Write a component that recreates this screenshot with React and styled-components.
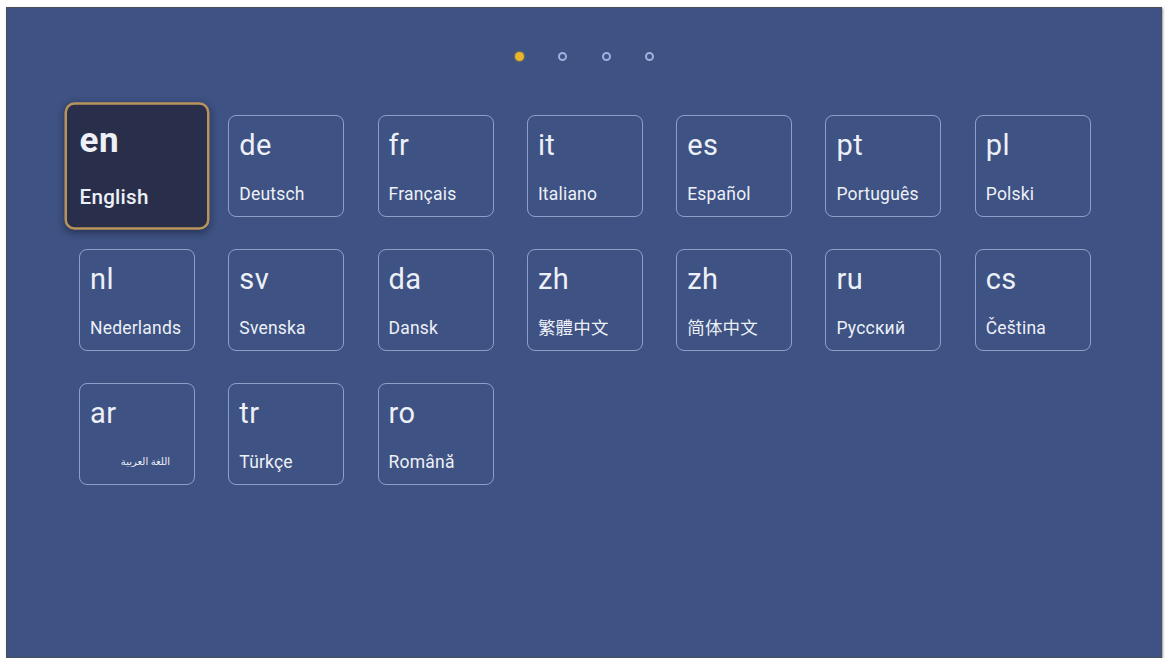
import React from 'react'
import styled, { createGlobalStyle } from 'styled-components'

const GlobalStyle = createGlobalStyle`
  html, body {
    margin: 0;
    padding: 0;
    background: #ffffff;
  }
  body {
    font-family: Roboto, "Noto Sans", "Noto Sans CJK SC", sans-serif;
  }
`

const Screen = styled.main`
  box-sizing: border-box;
  width: 1156px;
  height: 651px;
  margin: 7px 0 0 6px;
  background: #3e5283;
  border: 1px solid #4a4f5c;
  box-shadow: 1px 1px 2px rgba(40, 40, 50, 0.5);
  padding: 43px 0 0 72px;
  overflow: hidden;
`

const Pager = styled.div`
  display: flex;
  justify-content: center;
  align-items: center;
  gap: 34.5px;
  width: 1011px;
  height: 11px;
  margin-bottom: 53px;
`

const Dot = styled.span`
  box-sizing: border-box;
  width: 9px;
  height: 9px;
  border-radius: 50%;
  background: ${p => (p.$active ? '#eab527' : 'transparent')};
  border: ${p => (p.$active ? 'none' : '2px solid #9fb0dc')};
  box-shadow: ${p => (p.$active ? '0 0 3px rgba(234, 181, 39, 0.6)' : 'none')};
`

const Grid = styled.div`
  display: grid;
  grid-template-columns: repeat(7, 116px);
  grid-auto-rows: 102px;
  column-gap: 33.3px;
  row-gap: 32px;
`

const Card = styled.div`
  box-sizing: border-box;
  display: flex;
  flex-direction: column;
  padding: 13px 10px 0 10px;
  border-radius: 8px;
  border: ${p => (p.$focused ? '2px solid #b8945a' : '1.5px solid rgba(190, 206, 242, 0.62)')};
  background: ${p => (p.$focused ? '#292f4b' : 'transparent')};
  color: #edf0f7;
  transform: ${p => (p.$focused ? 'scale(1.25)' : 'none')};
  box-shadow: ${p => (p.$focused ? '0 2px 6px rgba(10, 15, 35, 0.45)' : 'none')};
`

const Code = styled.div`
  font-size: ${p => (p.$focused ? '28px' : '29px')};
  line-height: 32px;
  font-weight: ${p => (p.$focused ? 700 : 400)};
  letter-spacing: 0.4px;
`

const Label = styled.div`
  margin-top: ${p => (p.$focused ? '19px' : '23px')};
  margin-right: ${p => (p.$rtl ? '14px' : '0')};
  font-size: ${p => (p.$rtl ? '10px' : p.$focused ? '16.5px' : '17.5px')};
  line-height: 20px;
  letter-spacing: ${p => (p.$rtl ? '0' : '0.2px')};
  font-weight: ${p => (p.$focused ? 500 : 400)};
  text-align: ${p => (p.$rtl ? 'right' : 'left')};
  direction: ${p => (p.$rtl ? 'rtl' : 'ltr')};
  font-family: Roboto, "Noto Sans", "DejaVu Sans", "Noto Sans CJK SC", sans-serif;
  white-space: nowrap;
`

const languages = [
  { code: 'en', name: 'English' },
  { code: 'de', name: 'Deutsch' },
  { code: 'fr', name: 'Français' },
  { code: 'it', name: 'Italiano' },
  { code: 'es', name: 'Español' },
  { code: 'pt', name: 'Português' },
  { code: 'pl', name: 'Polski' },
  { code: 'nl', name: 'Nederlands' },
  { code: 'sv', name: 'Svenska' },
  { code: 'da', name: 'Dansk' },
  { code: 'zh', name: '繁體中文', lang: 'zh-TW' },
  { code: 'zh', name: '简体中文', lang: 'zh-CN' },
  { code: 'ru', name: 'Русский' },
  { code: 'cs', name: 'Čeština' },
  { code: 'ar', name: 'اللغة العربية', rtl: true },
  { code: 'tr', name: 'Türkçe' },
  { code: 'ro', name: 'Română' },
]

export default function App() {
  const selected = 0
  return (
    <>
      <GlobalStyle />
      <Screen>
        <Pager>
          <Dot $active />
          <Dot />
          <Dot />
          <Dot />
        </Pager>
        <Grid>
          {languages.map((l, i) => (
            <Card key={l.code + i} $focused={i === selected}>
              <Code $focused={i === selected}>{l.code}</Code>
              <Label $focused={i === selected} $rtl={l.rtl} lang={l.lang}>
                {l.name}
              </Label>
            </Card>
          ))}
        </Grid>
      </Screen>
    </>
  )
}
